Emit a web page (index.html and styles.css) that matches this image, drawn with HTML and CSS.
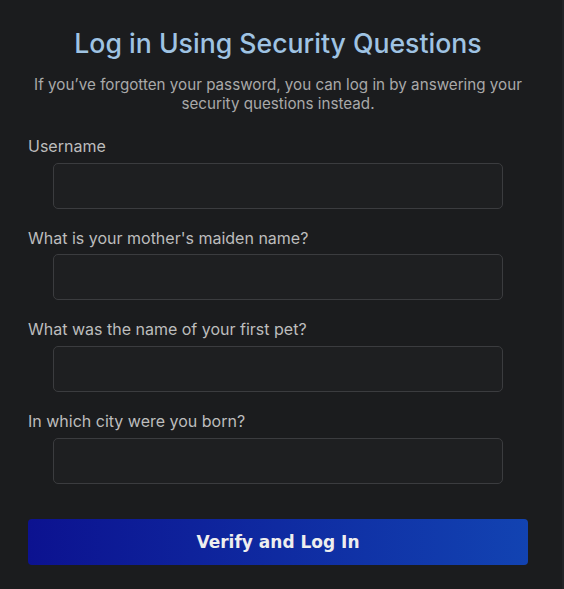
FILE: index.html
```html
<!DOCTYPE html>
<html lang="en">
<head>
<meta charset="utf-8">
<title>Log in Using Security Questions</title>
<link rel="stylesheet" href="styles.css">
</head>
<body>
<div class="page">
  <form class="card">
    <h1 class="title">Log in Using Security Questions</h1>
    <p class="subtitle">If you’ve forgotten your password, you can log in by answering your security questions instead.</p>
    <div class="group">
      <label class="label" for="u">Username</label>
      <input class="field" id="u" type="text">
    </div>
    <div class="group">
      <label class="label" for="q1">What is your mother's maiden name?</label>
      <input class="field" id="q1" type="text">
    </div>
    <div class="group">
      <label class="label" for="q2">What was the name of your first pet?</label>
      <input class="field" id="q2" type="text">
    </div>
    <div class="group">
      <label class="label" for="q3">In which city were you born?</label>
      <input class="field" id="q3" type="text">
    </div>
    <button class="submit" type="button">Verify and Log In</button>
  </form>
</div>
</body>
</html>
```

FILE: styles.css
```css
html, body {
  margin: 0;
  padding: 0;
  background: #1b1c1e;
  height: 100%;
}
body {
  font-family: Inter, "Noto Sans", sans-serif;
}
.page {
  min-height: 100%;
  box-sizing: border-box;
  border-right: 2px solid #222326;
  padding: 27px 0 0 28px;
}
.card {
  width: 500px;
  display: flex;
  flex-direction: column;
}
.title {
  margin: 0;
  font-size: 26.65px;
  line-height: 32px;
  font-weight: 500;
  color: #9fc3e3;
  text-align: center;
}
.subtitle {
  margin: 16px 0 24px;
  font-size: 15.2px;
  line-height: 19px;
  color: #a9a9a9;
  text-align: center;
}
.group {
  display: flex;
  flex-direction: column;
  margin-bottom: 20px;
}
.label {
  font-size: 16px;
  line-height: 19.67px;
  color: #bdbdbd;
  margin-bottom: 6px;
}
.field {
  align-self: center;
  width: 450px;
  height: 46px;
  box-sizing: border-box;
  background: #1e1f21;
  border: 1px solid #3b3c3f;
  border-radius: 5px;
  color: #ddd;
  font: inherit;
  padding: 0 12px;
  outline: none;
}
.submit {
  margin-top: 15px;
  height: 46px;
  border: none;
  border-radius: 4px;
  background: linear-gradient(to right, #0c1290, #1243b2);
  color: #eeeeee;
  font-family: "DejaVu Sans", sans-serif;
  font-weight: bold;
  font-size: 17px;
  padding-top: 2px;
  cursor: pointer;
}
```
